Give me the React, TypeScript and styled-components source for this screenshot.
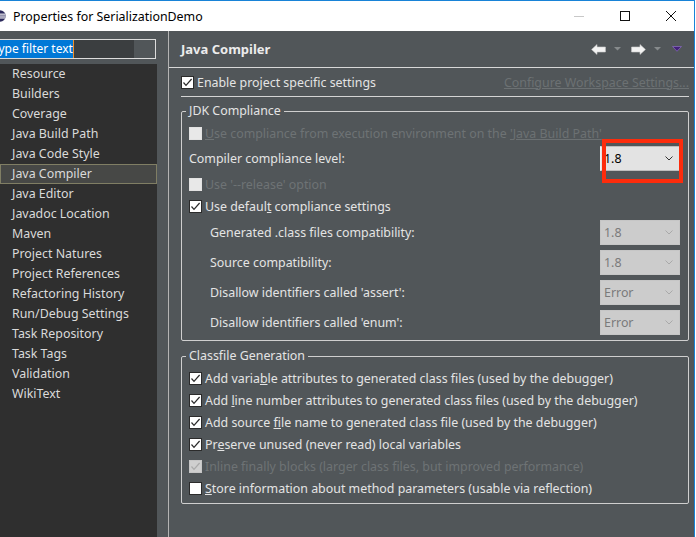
import React from 'react';
import styled, { createGlobalStyle } from 'styled-components';

const FONT = `"Noto Sans", "Open Sans", "Liberation Sans", sans-serif`;

const Global = createGlobalStyle`
  html, body { margin: 0; padding: 0; background: #ffffff; }
  body { font-family: ${FONT}; }
  * { box-sizing: border-box; }
`;

const Window = styled.div`
  width: 695px;
  height: 537px;
  border-top: 1px solid #1883d7;
  border-right: 1px solid #1883d7;
  display: flex;
  flex-direction: column;
  overflow: hidden;
  font-family: ${FONT};
  font-size: 12.4px;
`;

const TitleBar = styled.div`
  height: 30px;
  flex-shrink: 0;
  background: #ffffff;
  display: flex;
  align-items: center;
`;

const AppIcon = styled.svg`
  margin-left: -6px;
  flex-shrink: 0;
`;

const TitleText = styled.span`
  margin-left: 7px;
  font-size: 12.4px;
  color: #000;
  flex: 1;
`;

const Controls = styled.div`
  display: flex;
  height: 100%;
`;

const ControlButton = styled.div`
  width: 46px;
  height: 30px;
  display: flex;
  align-items: center;
  justify-content: center;
`;

const Main = styled.div`
  flex: 1;
  display: flex;
  background: #515659;
  min-height: 0;
`;

const Sidebar = styled.div`
  width: 157px;
  flex-shrink: 0;
  display: flex;
  flex-direction: column;
`;

const FilterBox = styled.div`
  margin-top: 8px;
  margin-left: -10px;
  width: 166px;
  height: 20px;
  border: 1px solid #dcdcdc;
  display: flex;
  background: #515659;
`;

const FilterField = styled.div`
  width: 143px;
  height: 100%;
  background: #3b3e40;
  display: flex;
  align-items: stretch;
`;

const Selection = styled.span`
  background: #0078d7;
  color: #ffffff;
  font-size: 12px;
  line-height: 18px;
  padding-left: 1px;
  white-space: nowrap;
`;

const Caret = styled.span`
  width: 1px;
  background: #f0902a;
`;

const Tree = styled.div`
  margin-top: 5px;
  flex: 1;
  background: #2f2f2f;
`;

const TreeItem = styled.div<{ $selected?: boolean }>`
  height: 20px;
  line-height: 18px;
  padding-left: 11px;
  font-size: 12.4px;
  color: #dadada;
  white-space: nowrap;
  border: 1px solid ${p => (p.$selected ? '#807e64' : 'transparent')};
  background: ${p => (p.$selected ? '#474846' : 'transparent')};
`;

const RightPanel = styled.div`
  margin-left: 11px;
  flex: 1;
  border-left: 1px solid #b4b4b4;
  display: flex;
  flex-direction: column;
  color: #e4e4e4;
`;

const Header = styled.div`
  height: 37px;
  flex-shrink: 0;
  border-bottom: 1px solid #d8d8d8;
  display: flex;
  align-items: center;
  padding: 0 12px 0 12px;
`;

const HeaderTitle = styled.div`
  font-size: 13px;
  font-weight: bold;
  color: #ececec;
  flex: 1;
`;

const NavIcons = styled.div`
  display: flex;
  align-items: center;
`;

const NavIcon = styled.svg<{ $gap?: number }>`
  margin-left: ${p => p.$gap ?? 0}px;
  display: block;
`;

const Body = styled.div`
  padding: 0 5px 0 12px;
  display: flex;
  flex-direction: column;
`;

const Row = styled.div<{ $h?: number; $mt?: number; $indent?: number }>`
  display: flex;
  align-items: center;
  height: ${p => p.$h ?? 20}px;
  margin-top: ${p => p.$mt ?? 0}px;
  padding-left: ${p => p.$indent ?? 0}px;
  white-space: nowrap;
`;

const Label = styled.span<{ $disabled?: boolean }>`
  color: ${p => (p.$disabled ? '#6e7375' : '#e4e4e4')};
`;

const LinkText = styled.span<{ $right?: boolean }>`
  text-decoration: underline;
  color: #6c7173;
  margin-left: ${p => (p.$right ? 'auto' : '0')};
`;

const U = styled.span`
  text-decoration: underline;
`;

const Separator = styled.div`
  margin-top: 4px;
  height: 1px;
  background: #d4d4d4;
`;

const Group = styled.fieldset<{ $mt: number; $pt: number; $pb: number }>`
  margin: ${p => p.$mt}px 0 0 0;
  border: 1px solid #cfcfcf;
  border-radius: 2px;
  padding: ${p => p.$pt}px 8px ${p => p.$pb}px 7px;
  min-width: 0;
`;

const Legend = styled.legend`
  margin-left: -3px;
  padding: 0 3px;
  line-height: 16px;
  height: 16px;
  font-size: 12.4px;
  color: #e4e4e4;
`;

const Box = styled.span<{ $disabled?: boolean; $checked?: boolean }>`
  width: 13px;
  height: 13px;
  flex-shrink: 0;
  margin-right: 3px;
  border: 1px solid ${p => (p.$disabled ? (p.$checked ? '#c6c6c6' : '#e2e2e2') : '#2b2b2b')};
  background: ${p => (p.$disabled ? (p.$checked ? '#cfcfcf' : '#e8e8e8') : '#ffffff')};
  display: flex;
  align-items: center;
  justify-content: center;
`;

const ComboWrap = styled.div`
  position: relative;
  margin-left: auto;
`;

const Combo = styled.div<{ $disabled?: boolean }>`
  width: 80px;
  height: 25px;
  border: 1px solid ${p => (p.$disabled ? '#c6c6c6' : '#bdbdbd')};
  border-left-color: ${p => (p.$disabled ? '#c6c6c6' : '#f2f2f2')};
  background: ${p => (p.$disabled ? '#cccccc' : '#e3e3e3')};
  color: ${p => (p.$disabled ? '#7a7a7a' : '#000000')};
  display: flex;
  align-items: center;
  padding: 0 6px 0 3px;
  font-size: 12.4px;
`;

const ComboValue = styled.span`
  flex: 1;
`;

const Highlight = styled.div`
  position: absolute;
  left: 2px;
  top: -7px;
  width: 81px;
  height: 44px;
  border: 4px solid #fd2c0c;
  pointer-events: none;
`;

function Check({ checked, disabled }: { checked?: boolean; disabled?: boolean }) {
  return (
    <Box $disabled={disabled} $checked={checked}>
      {checked && (
        <svg width="11" height="11" viewBox="0 0 11 11">
          <polyline
            points="1.5,5.5 4,8.3 9.6,2"
            fill="none"
            stroke={disabled ? '#a9a9a9' : '#2a2a2a'}
            strokeWidth="1.2"
          />
        </svg>
      )}
    </Box>
  );
}

function Chevron({ disabled }: { disabled?: boolean }) {
  return (
    <svg width="8" height="5" viewBox="0 0 8 5">
      <polyline points="0.5,0.5 4,4 7.5,0.5" fill="none" stroke={disabled ? '#a9a9a9' : '#333'} strokeWidth="1" />
    </svg>
  );
}

function ComboBox({ value, disabled, marked }: { value: string; disabled?: boolean; marked?: boolean }) {
  return (
    <ComboWrap>
      <Combo $disabled={disabled}>
        <ComboValue>{value}</ComboValue>
        <Chevron disabled={disabled} />
      </Combo>
      {marked && <Highlight />}
    </ComboWrap>
  );
}

const treeItems = [
  'Resource',
  'Builders',
  'Coverage',
  'Java Build Path',
  'Java Code Style',
  'Java Compiler',
  'Java Editor',
  'Javadoc Location',
  'Maven',
  'Project Natures',
  'Project References',
  'Refactoring History',
  'Run/Debug Settings',
  'Task Repository',
  'Task Tags',
  'Validation',
  'WikiText',
];

const subRows: { label: string; value: string; mt: number }[] = [
  { label: 'Generated .class files compatibility:', value: '1.8', mt: 4 },
  { label: 'Source compatibility:', value: '1.8', mt: 5 },
  { label: "Disallow identifiers called 'assert':", value: 'Error', mt: 5 },
  { label: "Disallow identifiers called 'enum':", value: 'Error', mt: 5 },
];

function BackArrow({ flip, gap }: { flip?: boolean; gap?: number }) {
  return (
    <NavIcon $gap={gap} width="15" height="11" viewBox="0 0 15 11">
      <path
        d="M0.6 5.5 L6 0.6 L6 3 L14.4 3 L14.4 8 L6 8 L6 10.4 Z"
        fill="#f3f3f3"
        stroke="#cfcfcf"
        strokeWidth="0.6"
        strokeLinejoin="round"
        transform={flip ? 'translate(15 0) scale(-1 1)' : undefined}
      />
    </NavIcon>
  );
}

function SmallDrop({ gap }: { gap: number }) {
  return (
    <NavIcon $gap={gap} width="7" height="4" viewBox="0 0 7 4">
      <path d="M0 0 L7 0 L3.5 3.6 Z" fill="#868a8c" />
    </NavIcon>
  );
}

export default function App() {
  return (
    <>
      <Global />
      <Window>
        <TitleBar>
          <AppIcon width="12" height="12" viewBox="0 0 12 12">
            <circle cx="6" cy="6" r="5.8" fill="#2c2a5c" />
            <rect x="0.5" y="3.6" width="11" height="1.1" fill="#ffffff" />
            <rect x="0.3" y="5.5" width="11.4" height="1.1" fill="#ffffff" />
            <rect x="0.5" y="7.4" width="11" height="1.1" fill="#ffffff" />
          </AppIcon>
          <TitleText>Properties for SerializationDemo</TitleText>
          <Controls>
            <ControlButton>
              <svg width="10" height="1" viewBox="0 0 10 1">
                <rect width="10" height="1" fill="#c8c8c8" />
              </svg>
            </ControlButton>
            <ControlButton>
              <svg width="10" height="10" viewBox="0 0 10 10">
                <rect x="0.5" y="0.5" width="9" height="9" fill="none" stroke="#111" strokeWidth="1" />
              </svg>
            </ControlButton>
            <ControlButton>
              <svg width="10" height="10" viewBox="0 0 10 10">
                <path d="M0 0 L10 10 M10 0 L0 10" stroke="#111" strokeWidth="1" />
              </svg>
            </ControlButton>
          </Controls>
        </TitleBar>
        <Main>
          <Sidebar>
            <FilterBox>
              <FilterField>
                <Selection>Type filter text</Selection>
                <Caret />
              </FilterField>
            </FilterBox>
            <Tree>
              {treeItems.map(t => (
                <TreeItem key={t} $selected={t === 'Java Compiler'}>
                  {t}
                </TreeItem>
              ))}
            </Tree>
          </Sidebar>
          <RightPanel>
            <Header>
              <HeaderTitle>Java Compiler</HeaderTitle>
              <NavIcons>
                <BackArrow />
                <SmallDrop gap={8} />
                <BackArrow flip gap={10} />
                <SmallDrop gap={8} />
                <NavIcon $gap={11} width="10" height="6" viewBox="0 0 10 6">
                  <path d="M0.5 0.5 L9.5 0.5 L5 5.3 Z" fill="#43207a" stroke="#8468b8" strokeWidth="0.8" />
                </NavIcon>
              </NavIcons>
            </Header>
            <Body>
              <Row $mt={4}>
                <Check checked />
                <Label>
                  Enable pro<U>j</U>ect specific settings
                </Label>
                <LinkText $right>Configure Workspace Settings...</LinkText>
              </Row>
              <Separator />
              <Group $mt={6} $pt={4} $pb={5}>
                <Legend>JDK Compliance</Legend>
                <Row>
                  <Check disabled />
                  <Label $disabled>
                    <U>U</U>se compliance from execution environment on the <LinkText>'Java Build Path'</LinkText>
                  </Label>
                </Row>
                <Row $h={25} $mt={3}>
                  <Label>Compiler compliance level:</Label>
                  <ComboBox value="1.8" marked />
                </Row>
                <Row $mt={3}>
                  <Check disabled />
                  <Label $disabled>Use '--release' option</Label>
                </Row>
                <Row $mt={2}>
                  <Check checked />
                  <Label>
                    Use defaul<U>t</U> compliance settings
                  </Label>
                </Row>
                {subRows.map(r => (
                  <Row key={r.label} $h={25} $mt={r.mt} $indent={21}>
                    <Label>{r.label}</Label>
                    <ComboBox value={r.value} disabled />
                  </Row>
                ))}
              </Group>
              <Group $mt={7} $pt={3} $pb={4}>
                <Legend>Classfile Generation</Legend>
                <Row $h={22}>
                  <Check checked />
                  <Label>
                    Add varia<U>b</U>le attributes to generated class files (used by the debugger)
                  </Label>
                </Row>
                <Row $h={22}>
                  <Check checked />
                  <Label>
                    Add <U>l</U>ine number attributes to generated class files (used by the debugger)
                  </Label>
                </Row>
                <Row $h={22}>
                  <Check checked />
                  <Label>
                    Add source <U>f</U>ile name to generated class file (used by the debugger)
                  </Label>
                </Row>
                <Row $h={22}>
                  <Check checked />
                  <Label>
                    Pr<U>e</U>serve unused (never read) local variables
                  </Label>
                </Row>
                <Row $h={22}>
                  <Check checked disabled />
                  <Label $disabled>Inline finally blocks (larger class files, but improved performance)</Label>
                </Row>
                <Row $h={22}>
                  <Check />
                  <Label>
                    <U>S</U>tore information about method parameters (usable via reflection)
                  </Label>
                </Row>
              </Group>
            </Body>
          </RightPanel>
        </Main>
      </Window>
    </>
  );
}
